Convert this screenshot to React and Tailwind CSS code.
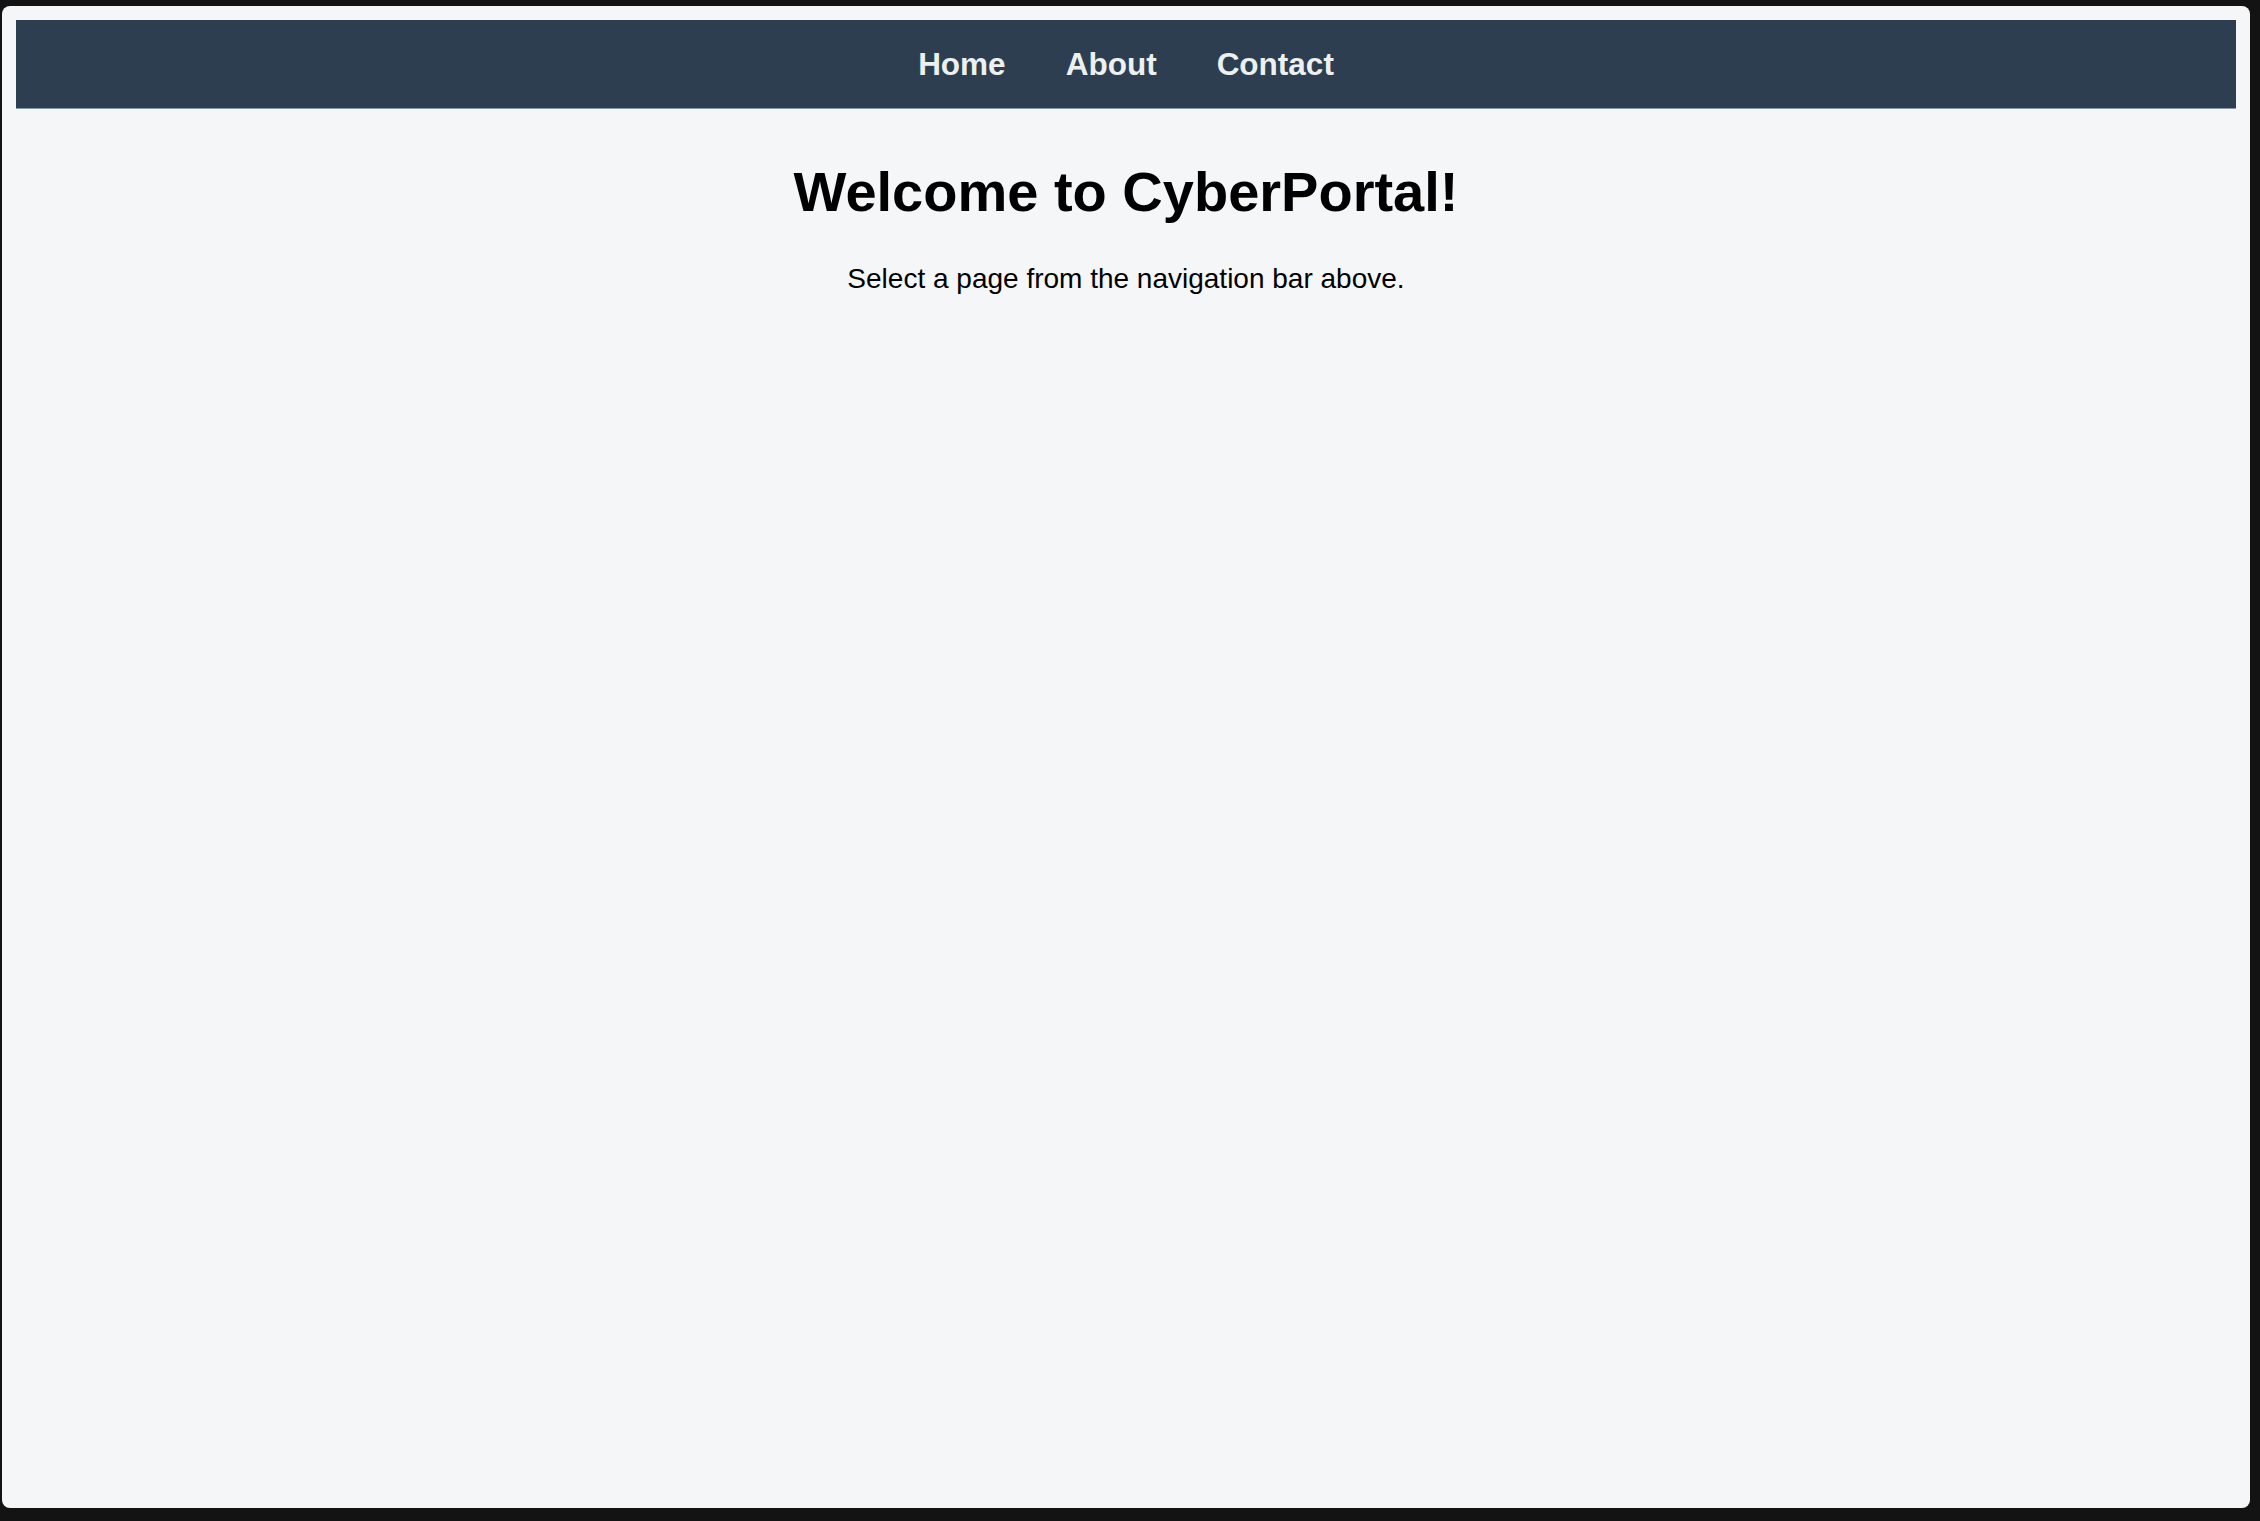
const NAV_LINKS = ["Home", "About", "Contact"];

export default function App() {
  return (
    <div
      className="h-[1521px] bg-[#131313] pl-[2px] pt-[6px] pr-[10px] pb-[13px]"
      style={{ fontFamily: '"Liberation Sans", Arial, sans-serif' }}
    >
      <div className="h-full rounded-[8px] bg-[#f5f6f8] p-[14px]">
        {/* top nav */}
        <nav className="flex h-[89px] items-center justify-center gap-[60px] border-b border-[#8795a6] bg-[#2c3e50]">
          {NAV_LINKS.map((label) => (
            <a
              key={label}
              href="#"
              className="pt-[2px] text-[31.5px] font-bold leading-none text-[#ecf0f1]"
            >
              {label}
            </a>
          ))}
        </nav>

        {/* hero */}
        <div className="flex flex-col items-center pt-[55px]">
          <h1 className="text-[56px] font-bold leading-none text-black">
            Welcome to CyberPortal!
          </h1>
          <p className="mt-[45px] text-[28px] leading-none text-black">
            Select a page from the navigation bar above.
          </p>
        </div>
      </div>
    </div>
  );
}
